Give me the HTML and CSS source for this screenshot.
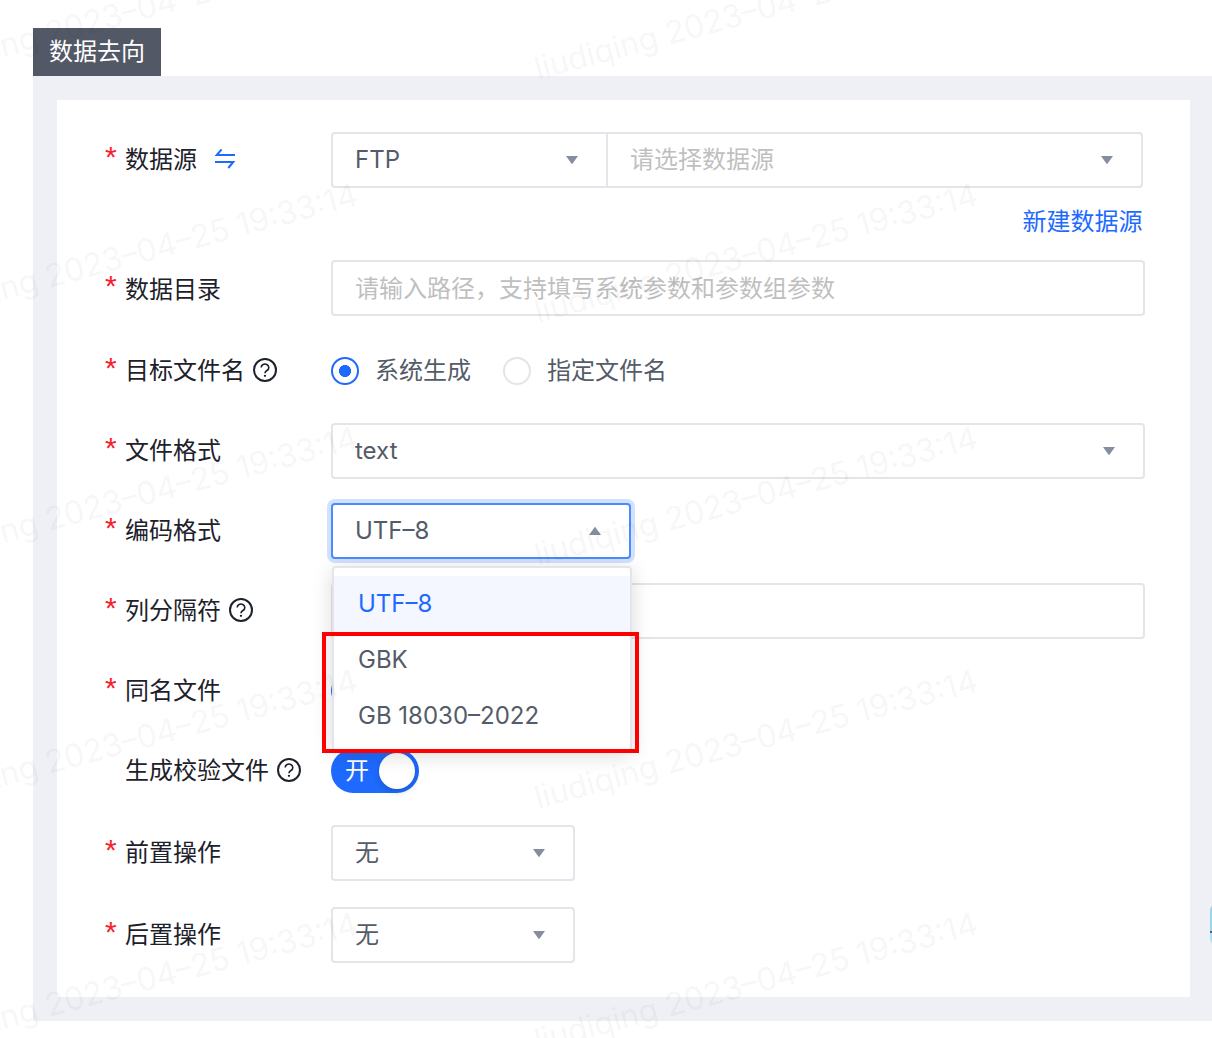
FILE: index.html
```html
<!DOCTYPE html>
<html lang="zh-CN">
<head>
<meta charset="utf-8">
<title>数据去向</title>
<link rel="stylesheet" href="styles.css">
</head>
<body>
<svg class="defs" width="0" height="0">
  <symbol id="help" viewBox="0 0 24 24"><circle cx="12" cy="12" r="11" fill="none" stroke="currentColor" stroke-width="2"/><path d="M8.2 9.6a3.8 3.5 0 1 1 5.8 2.9c-1.3.8-2 1.2-2 2.7" fill="none" stroke="currentColor" stroke-width="1.6"/><circle cx="12" cy="17.8" r="1.15" fill="currentColor"/></symbol>
  <symbol id="caret" viewBox="0 0 12 8"><path d="M0 0H12L6.6 7.5Q6 8.3 5.4 7.5Z" fill="currentColor"/></symbol>
</svg>
<main class="page">
  <h1 class="tag">数据去向</h1>
  <section class="panel">
    <form class="card">
      <div class="row source">
        <label class="label required">数据源<svg class="swap" viewBox="0 0 20 20"><path d="M6.6 .4L1.8 6H20M0 13H18.2L13.3 19" fill="none" stroke="currentColor" stroke-width="2"/></svg></label>
        <div class="pair">
          <div class="box type"><span>FTP</span><svg class="caret"><use href="#caret"/></svg></div>
          <div class="box origin"><span class="placeholder">请选择数据源</span><svg class="caret"><use href="#caret"/></svg></div>
        </div>
      </div>
      <a class="create">新建数据源</a>
      <div class="row directory">
        <label class="label required">数据目录</label>
        <div class="box"><span class="placeholder">请输入路径，支持填写系统参数和参数组参数</span></div>
      </div>
      <div class="row target">
        <label class="label required">目标文件名<svg class="help"><use href="#help"/></svg></label>
        <div class="radios">
          <span class="radio checked"></span><span class="choice">系统生成</span>
          <span class="radio"></span><span class="choice">指定文件名</span>
        </div>
      </div>
      <div class="row">
        <label class="label required">文件格式</label>
        <div class="box"><span>text</span><svg class="caret"><use href="#caret"/></svg></div>
      </div>
      <div class="row">
        <label class="label required">编码格式</label>
        <div class="encoding">
          <div class="box focused"><span>UTF–8</span><svg class="caret up"><use href="#caret"/></svg></div>
          <div class="menu">
            <div class="option selected">UTF–8</div>
            <div class="option">GBK</div>
            <div class="option">GB 18030–2022</div>
          </div>
          <div class="highlight"></div>
        </div>
      </div>
      <div class="row">
        <label class="label required">列分隔符<svg class="help"><use href="#help"/></svg></label>
        <div class="box"></div>
      </div>
      <div class="row">
        <label class="label required">同名文件</label>
        <div class="radios"><span class="radio checked"></span></div>
      </div>
      <div class="row">
        <label class="label">生成校验文件<svg class="help"><use href="#help"/></svg></label>
        <div class="switch"><span>开</span><i class="knob"></i></div>
      </div>
      <div class="row operation">
        <label class="label required">前置操作</label>
        <div class="box short"><span>无</span><svg class="caret"><use href="#caret"/></svg></div>
      </div>
      <div class="row operation">
        <label class="label required">后置操作</label>
        <div class="box short"><span>无</span><svg class="caret"><use href="#caret"/></svg></div>
      </div>
    </form>
  </section>
</main>
<div class="assistant"></div>
<svg class="watermark" width="1212" height="1038" viewBox="0 0 1212 1038">
  <g transform="translate(-82 80) rotate(-15)"><text textLength="457">liudiqing 2023–04–25 19:33:14</text></g>
  <g transform="translate(538 80) rotate(-15)"><text textLength="457">liudiqing 2023–04–25 19:33:14</text></g>
  <g transform="translate(-82 323) rotate(-15)"><text textLength="457">liudiqing 2023–04–25 19:33:14</text></g>
  <g transform="translate(538 323) rotate(-15)"><text textLength="457">liudiqing 2023–04–25 19:33:14</text></g>
  <g transform="translate(-82 566) rotate(-15)"><text textLength="457">liudiqing 2023–04–25 19:33:14</text></g>
  <g transform="translate(538 566) rotate(-15)"><text textLength="457">liudiqing 2023–04–25 19:33:14</text></g>
  <g transform="translate(-82 809) rotate(-15)"><text textLength="457">liudiqing 2023–04–25 19:33:14</text></g>
  <g transform="translate(538 809) rotate(-15)"><text textLength="457">liudiqing 2023–04–25 19:33:14</text></g>
  <g transform="translate(-82 1052) rotate(-15)"><text textLength="457">liudiqing 2023–04–25 19:33:14</text></g>
  <g transform="translate(538 1052) rotate(-15)"><text textLength="457">liudiqing 2023–04–25 19:33:14</text></g>
</svg>
</body>
</html>
```
FILE: styles.css
```css
* { box-sizing: border-box; }
body {
  margin: 0;
  height: 1038px;
  overflow: hidden;
  position: relative;
  background: #fff;
  color: #545b69;
  font: 24px/36px Inter, "Noto Sans CJK SC", sans-serif;
}
.defs { position: absolute; }
.page { padding: 28px 0 0 33px; }
.tag {
  width: 128px;
  height: 48px;
  margin: 0;
  padding-left: 16px;
  background: #525866;
  color: #fff;
  font-size: 24px;
  font-weight: 400;
  line-height: 48px;
}
.panel { height: 945px; padding: 24px 22px 24px 24px; background: #eff0f5; }
.card {
  display: flex;
  flex-direction: column;
  height: 897px;
  padding: 32px 45px 0 48px;
  background: #fff;
}
.row {
  display: grid;
  grid-template-columns: 226px 1fr;
  align-items: center;
  flex: none;
  height: 56px;
  margin-bottom: 24px;
}
.source { margin-bottom: 16px; }
.target { margin-top: 3px; }
.operation { margin: 2px 0 24px; }
.label {
  display: flex;
  align-items: center;
  height: 56px;
  padding: 0 0 0 20px;
  color: #1d212b;
}
.directory .label { padding-top: 3px; }
.required { padding-left: 0; }
.required::before {
  content: "*";
  width: 20px;
  margin-bottom: 7px;
  color: #f5222d;
  font-family: "Liberation Sans", sans-serif;
  font-size: 30px;
}
.help { width: 24px; height: 24px; margin: -2px 0 0 8px; }
.swap { width: 20px; height: 20px; margin: -2px 0 0 18px; color: #1e6aff; }
.box {
  display: flex;
  align-items: center;
  justify-content: space-between;
  height: 56px;
  padding: 0 28px 0 22px;
  border: 2px solid #e4e4ea;
  border-radius: 4px;
}
.directory .box { padding-top: 2px; }
.caret { width: 12px; height: 8px; color: #868d9f; }
.up { transform: rotate(180deg); }
.placeholder { color: #bfbfbf; }
.pair { display: flex; width: 812px; }
.type { width: 277px; border-radius: 4px 0 0 4px; padding-right: 28px; }
.origin { flex: 1; margin-left: -2px; border-radius: 0 4px 4px 0; }
.create { align-self: flex-end; height: 36px; margin: 0 2.5px 20px 0; color: #1e6aff; }
.radios { display: flex; align-items: center; }
.radio { width: 28px; height: 28px; border: 2px solid #e4e4ea; border-radius: 50%; }
.checked { border-color: #1e6aff; background: radial-gradient(circle, #1e6aff 5.7px, #fff 6.3px); }
.choice { padding-bottom: 1px; margin: 0 32px 0 16px; }
.encoding { position: relative; width: 300px; z-index: 2; }
.focused { border-color: #4b8bff; box-shadow: 0 0 0 4px #d2e1ff; background: #fff; }
.menu {
  position: absolute;
  top: 63px;
  left: 1px;
  width: 300px;
  height: 185px;
  padding-top: 8px;
  border: 2px solid #e4e4ea;
  border-radius: 4px;
  background: #fff;
  box-shadow: 0 4px 20px rgba(0, 0, 0, .15);
}
.option { height: 56px; padding-left: 24px; line-height: 56px; }
.selected { background: #f4f7ff; color: #1e6aff; }
.highlight { position: absolute; top: 129px; left: -9px; width: 317px; height: 121px; border: 4px solid #f00; }
.switch {
  display: flex;
  align-items: center;
  justify-content: space-between;
  width: 88px;
  height: 44px;
  padding: 0 4px 0 14px;
  border-radius: 22px;
  background: #1e6aff;
  color: #fff;
}
.knob { width: 36px; height: 36px; border-radius: 50%; background: #fff; box-shadow: 0 3px 6px rgba(0, 35, 11, .2); }
.short { width: 244px; }
.assistant {
  position: absolute;
  top: 905px;
  left: 1210px;
  width: 12px;
  height: 39px;
  border-radius: 5px;
  background: linear-gradient(#9dd5ec 26px, #466575 26px 28px, #abe2f9 28px);
}
.watermark { position: absolute; inset: 0; z-index: 5; pointer-events: none; }
.watermark text { font: 400 32px Inter, sans-serif; fill: rgba(0, 0, 0, .053); }
```
